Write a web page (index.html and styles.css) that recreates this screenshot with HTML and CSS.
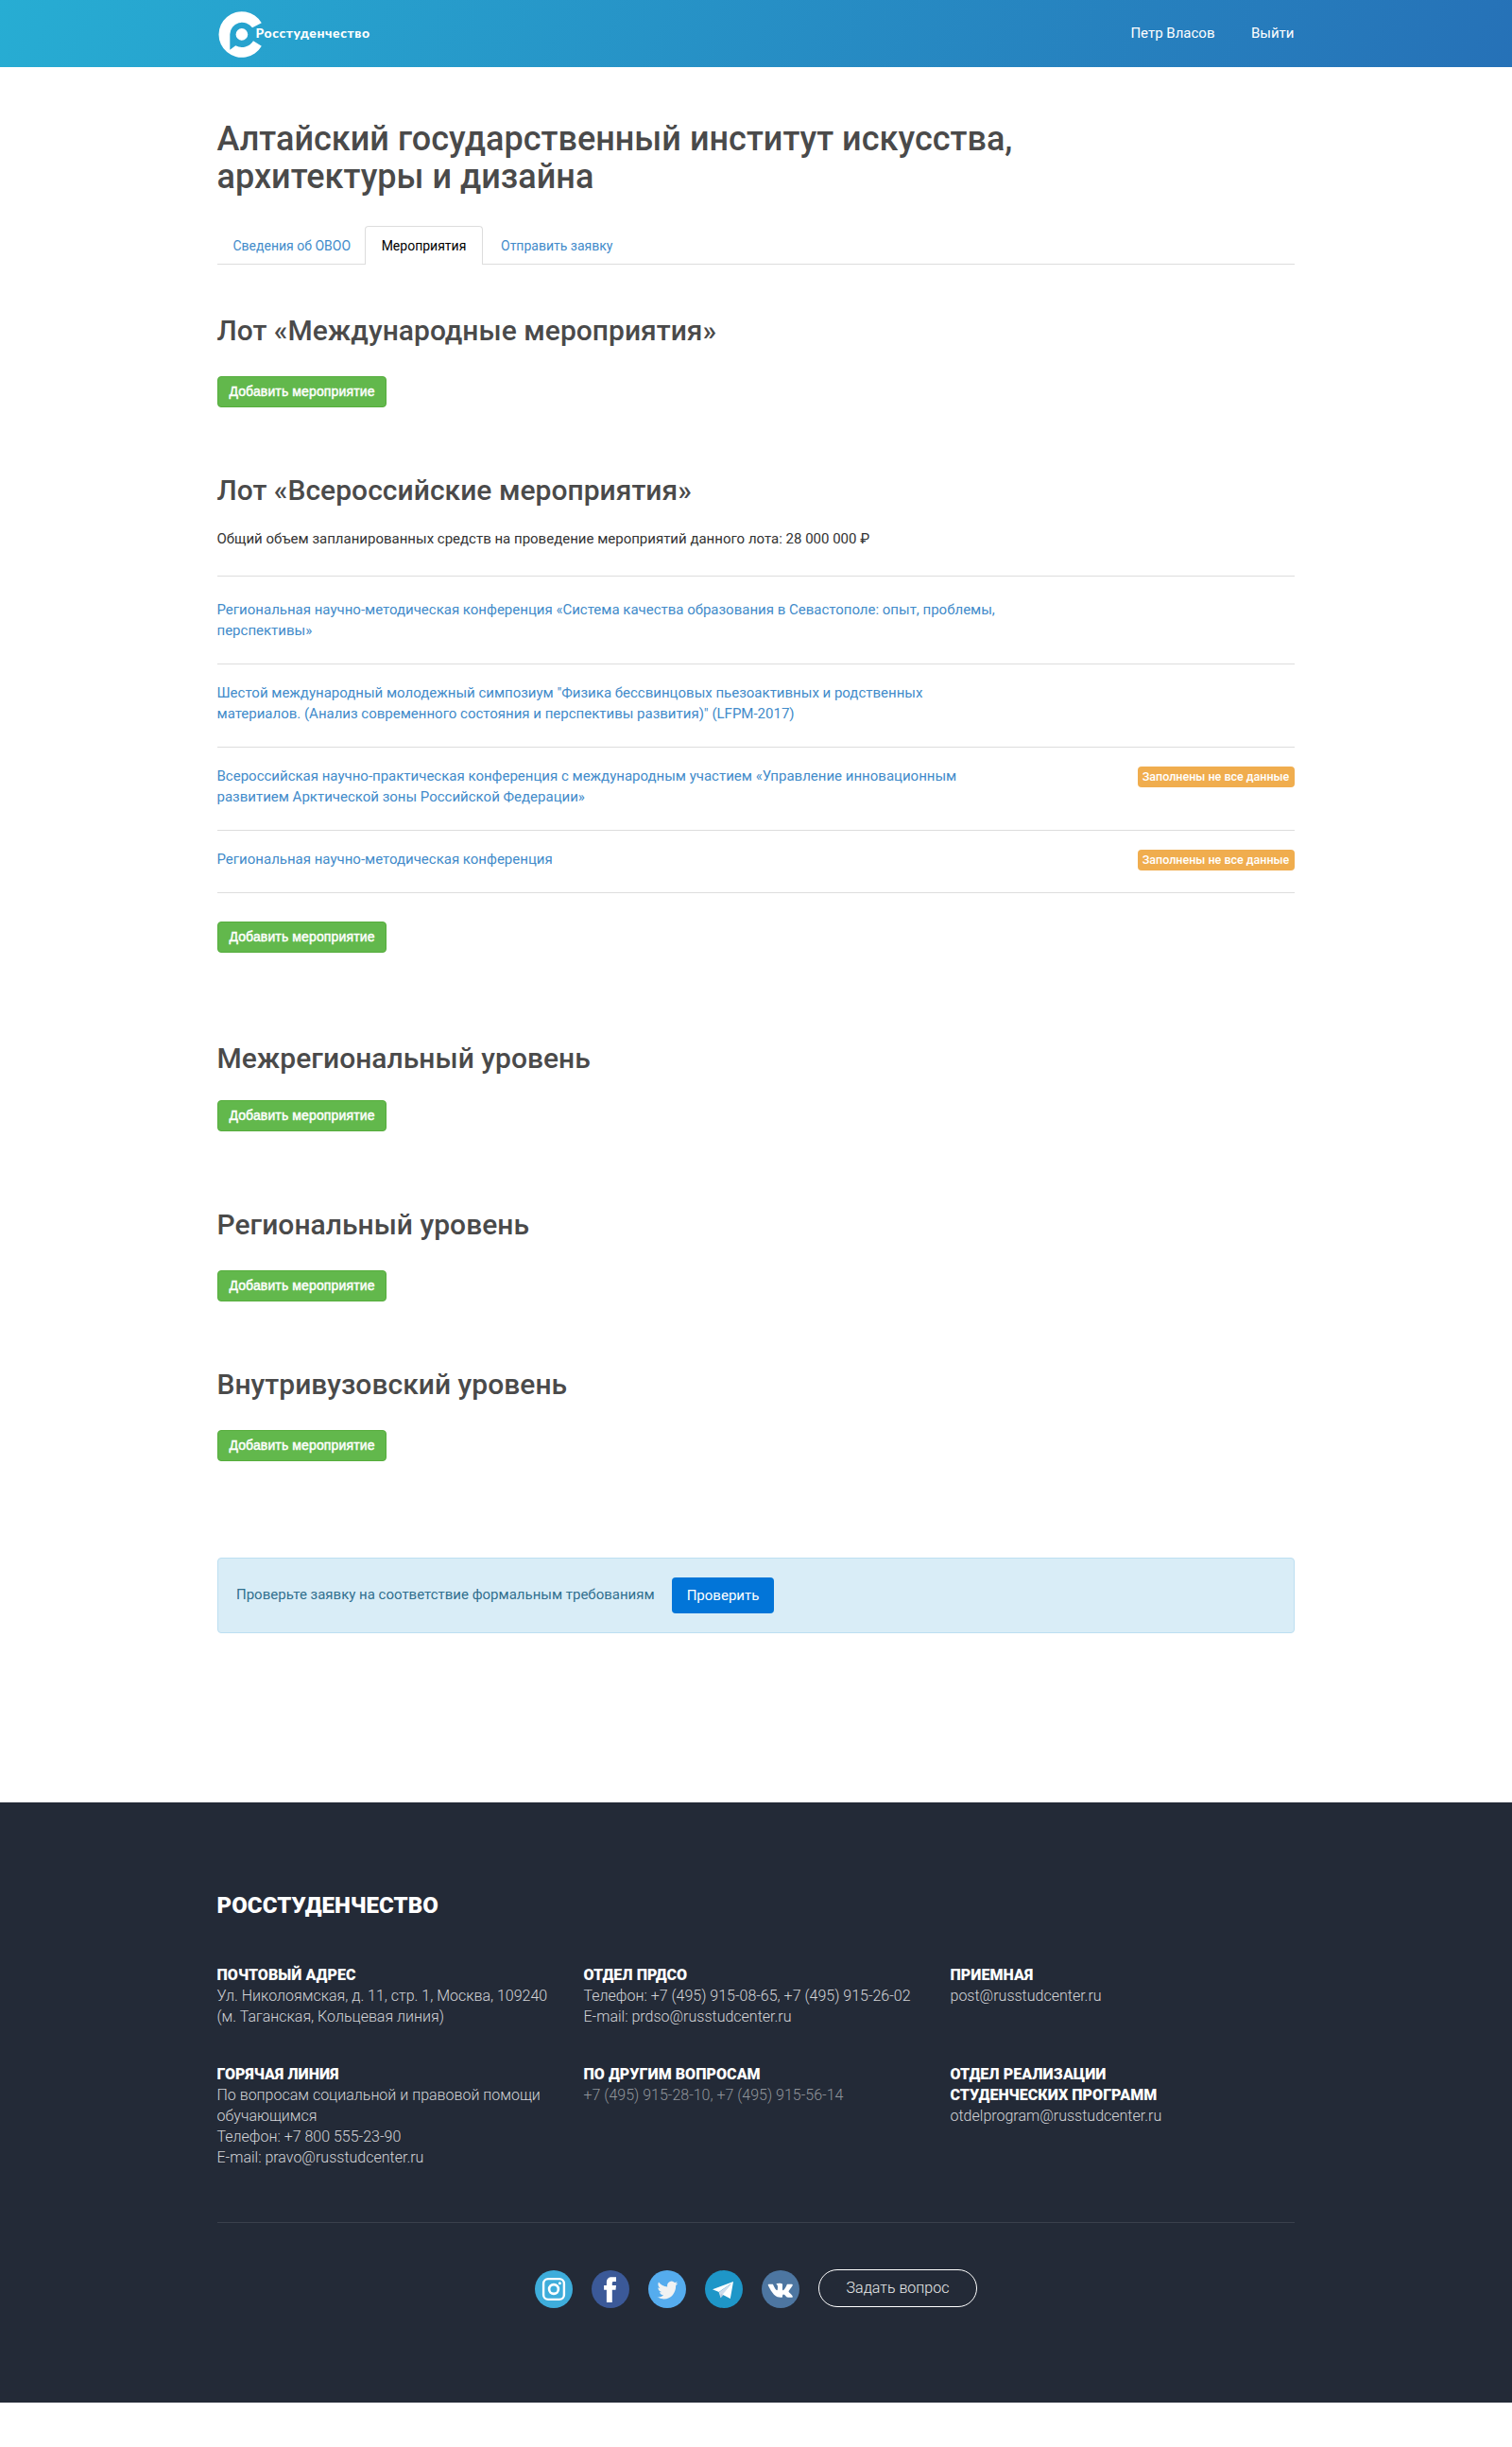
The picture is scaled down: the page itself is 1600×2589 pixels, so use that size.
FILE: index.html
```html
<!DOCTYPE html>
<html lang="ru">
<head>
<meta charset="utf-8">
<title>Росстуденчество</title>
<link rel="stylesheet" href="styles.css">
</head>
<body>
<header class="header">
  <div class="container header-inner">
    <a class="logo">
      <svg class="logo-mark" width="46" height="50" viewBox="0 0 46 50" fill="#fff">
        <path d="M45.8 13.3A24.3 24.3 0 1 0 45.8 37.7L37 32.2A14 14 0 0 1 18.3 37.3L12.3 41.7V25.3A13 13 0 0 1 36 18.3Z"/>
        <circle cx="24.9" cy="25.4" r="6.3"/>
      </svg>
      <span class="logo-text">Росстуденчество</span>
    </a>
    <nav class="user-nav">
      <a>Петр Власов</a>
      <a>Выйти</a>
    </nav>
  </div>
</header>

<main class="container main">
  <h1 class="title">Алтайский государственный институт искусства, архитектуры и дизайна</h1>
  <nav class="tabs">
    <a class="tab">Сведения об ОВОО</a>
    <a class="tab tab-active">Мероприятия</a>
    <a class="tab">Отправить заявку</a>
  </nav>

  <section class="lot lot-international">
    <h2>Лот «Международные мероприятия»</h2>
    <button class="btn-add">Добавить мероприятие</button>
  </section>

  <section class="lot lot-national">
    <h2>Лот «Всероссийские мероприятия»</h2>
    <p class="total">Общий объем запланированных средств на проведение мероприятий данного лота: 28 000 000 ₽</p>
    <ul class="events">
      <li class="event"><a>Региональная научно-методическая конференция «Система качества образования в Севастополе: опыт, проблемы, перспективы»</a></li>
      <li class="event"><a>Шестой международный молодежный симпозиум "Физика бессвинцовых пьезоактивных и родственных материалов. (Анализ современного состояния и перспективы развития)" (LFPM-2017)</a></li>
      <li class="event"><a>Всероссийская научно-практическая конференция с международным участием «Управление инновационным развитием Арктической зоны Российской Федерации»</a><span class="badge">Заполнены не все данные</span></li>
      <li class="event"><a>Региональная научно-методическая конференция</a><span class="badge">Заполнены не все данные</span></li>
    </ul>
    <button class="btn-add">Добавить мероприятие</button>
  </section>

  <section class="lot lot-interregional">
    <h2>Межрегиональный уровень</h2>
    <button class="btn-add">Добавить мероприятие</button>
  </section>

  <section class="lot lot-regional">
    <h2>Региональный уровень</h2>
    <button class="btn-add">Добавить мероприятие</button>
  </section>

  <section class="lot lot-university">
    <h2>Внутривузовский уровень</h2>
    <button class="btn-add">Добавить мероприятие</button>
  </section>

  <div class="alert">
    <span class="alert-text">Проверьте заявку на соответствие формальным требованиям</span>
    <button class="btn-check">Проверить</button>
  </div>
</main>

<footer class="footer">
  <div class="container">
    <h3 class="footer-title">РОССТУДЕНЧЕСТВО</h3>
    <div class="contacts">
      <div class="contact">
        <h4>ПОЧТОВЫЙ АДРЕС</h4>
        <p>Ул. Николоямская, д. 11, стр. 1, Москва, 109240<br>(м. Таганская, Кольцевая линия)</p>
      </div>
      <div class="contact">
        <h4>ОТДЕЛ ПРДСО</h4>
        <p>Телефон: +7 (495) 915-08-65, +7 (495) 915-26-02<br>E-mail: prdso@russtudcenter.ru</p>
      </div>
      <div class="contact">
        <h4>ПРИЕМНАЯ</h4>
        <p>post@russtudcenter.ru</p>
      </div>
      <div class="contact">
        <h4>ГОРЯЧАЯ ЛИНИЯ</h4>
        <p>По вопросам социальной и правовой помощи обучающимся<br>Телефон: +7 800 555-23-90<br>E-mail: pravo@russtudcenter.ru</p>
      </div>
      <div class="contact">
        <h4>ПО ДРУГИМ ВОПРОСАМ</h4>
        <p class="muted">+7 (495) 915-28-10, +7 (495) 915-56-14</p>
      </div>
      <div class="contact">
        <h4>ОТДЕЛ РЕАЛИЗАЦИИ<br>СТУДЕНЧЕСКИХ ПРОГРАММ</h4>
        <p>otdelprogram@russtudcenter.ru</p>
      </div>
    </div>
    <div class="social">
      <svg class="social-icon" viewBox="0 0 40 40">
        <circle cx="20" cy="20" r="20" fill="#3eaddb"/>
        <g fill="none" stroke="#fff">
          <rect x="9.1" y="9.1" width="21.8" height="21.8" rx="5" stroke-width="2.4"/>
          <circle cx="20" cy="20" r="4.9" stroke-width="2.6"/>
        </g>
        <circle cx="26.4" cy="13.7" r="1.5" fill="#fff"/>
      </svg>
      <svg class="social-icon" viewBox="0 0 40 40">
        <circle cx="20" cy="20" r="20" fill="#3b5998"/>
        <path fill="#fff" d="M15.9 34V20.7H13.1V15.9H15.9V13C15.9 9.2 17.8 7.2 21.5 7.2H26V12.1H23.2C22 12.1 21.8 12.8 21.8 14V15.9H26L25.5 20.7H21.8V34Z"/>
      </svg>
      <svg class="social-icon" viewBox="0 0 40 40">
        <circle cx="20" cy="20" r="20" fill="#55acee"/>
        <path fill="#f1f2f2" transform="translate(9.5 9.4) scale(.91 .97)" d="M23.953 4.57a10 10 0 01-2.825.775 4.958 4.958 0 002.163-2.723c-.951.555-2.005.959-3.127 1.184a4.92 4.92 0 00-8.384 4.482C7.69 8.095 4.067 6.13 1.64 3.162a4.822 4.822 0 00-.666 2.475c0 1.71.87 3.213 2.188 4.096a4.904 4.904 0 01-2.228-.616v.06a4.923 4.923 0 003.946 4.827 4.996 4.996 0 01-2.212.085 4.936 4.936 0 004.604 3.417 9.867 9.867 0 01-6.102 2.105c-.39 0-.779-.023-1.17-.067a13.995 13.995 0 007.557 2.209c9.053 0 13.998-7.496 13.998-13.985 0-.21 0-.42-.015-.63A9.935 9.935 0 0024 4.59z"/>
      </svg>
      <svg class="social-icon" viewBox="0 0 40 40">
        <circle cx="20" cy="20" r="20" fill="#1e96c8"/>
        <path fill="#cfdcec" d="M14.6 23.3L27.5 14.2L16.6 29.2Z"/>
        <path fill="#fff" d="M8 20.3L30 12L26.8 30L18.6 25.8L27.8 14.1L14.7 22.9Z"/>
        <path fill="#b5c7dc" d="M16.4 29.3L16.9 25L19.6 26.2Z"/>
      </svg>
      <svg class="social-icon" viewBox="0 0 40 40">
        <circle cx="20" cy="20" r="20" fill="#4d76a1"/>
        <path fill="#fff" transform="translate(6.7 8.4) scale(1.09 1.07)" d="M13.162 18.994c.609 0 .858-.406.851-.915-.031-1.917.714-2.949 2.059-1.604 1.488 1.488 1.796 2.519 3.603 2.519h3.2c.808 0 1.126-.26 1.126-.668 0-.863-1.421-2.386-2.625-3.504-1.686-1.565-1.765-1.602-.313-3.486 1.801-2.339 4.157-5.336 2.073-5.336h-3.981c-.772 0-.828.435-1.103 1.083-.995 2.347-2.886 5.387-3.604 4.922-.751-.485-.407-2.406-.35-5.261.015-.754.011-1.271-1.141-1.539-.629-.145-1.241-.205-1.809-.205-2.273 0-3.841.953-2.95 1.119 1.571.293 1.42 3.692 1.054 5.16-.638 2.556-3.036-2.024-4.035-4.305-.241-.548-.315-.974-1.175-.974h-3.255c-.492 0-.787.16-.787.516 0 .602 2.96 6.72 5.786 9.77 2.756 2.975 5.48 2.708 7.376 2.708z"/>
      </svg>
      <a class="ask">Задать вопрос</a>
    </div>
  </div>
</footer>
</body>
</html>
```
FILE: styles.css
```css
* { box-sizing: border-box; }

body {
  margin: 0;
  background: #fff;
  color: #333;
  font: 400 15px/22px Roboto, sans-serif;
}

h1, h2, h3, h4, p, ul { margin: 0; padding: 0; }
ul { list-style: none; }
button { border: 0; margin: 0; }

.container { width: 1140px; margin: 0 0 0 calc(50% - 570.5px); }

/* Header */
.header {
  height: 71px;
  background: linear-gradient(115deg, #27add3, #2671b7);
}
.header-inner {
  display: flex;
  justify-content: space-between;
  height: 71px;
}
.logo { display: flex; align-items: flex-start; padding: 11px 0 0 1px; }
.logo-mark { display: block; }
.logo-text {
  margin: 14px 0 0 -6px;
  color: #fff;
  font: 900 14px/20px Lato, sans-serif;
  letter-spacing: .58px;
}
.user-nav {
  display: flex;
  gap: 38.5px;
  padding-top: 24px;
  color: #fff;
}

/* Page body */
.main { height: 1836px; padding-top: 56px; }
.title {
  width: 870px;
  color: #4a4a4a;
  font-size: 36px;
  font-weight: 500;
  line-height: 40px;
  letter-spacing: .03px;
}
.tabs {
  display: flex;
  height: 41px;
  margin-top: 32px;
  border-bottom: 1px solid #ddd;
  font-size: 14px;
}
.tab {
  height: 41px;
  padding: 9px 15px 0 16px;
  border: 1px solid transparent;
  border-bottom: 0;
  color: #428bca;
}
.tab:first-child { width: 156.5px; padding-right: 0; white-space: nowrap; }
.tab-active {
  width: 125px;
  padding: 9px 0 0;
  border-color: #ddd;
  border-radius: 4px 4px 0 0;
  background: #fff;
  color: #000;
  text-align: center;
}
.tab-active + .tab { padding-left: 18px; }

.lot h2 {
  color: #4a4a4a;
  font-size: 30px;
  font-weight: 500;
  line-height: 33px;
  letter-spacing: .03px;
}
.btn-add {
  display: block;
  width: 179px;
  height: 33px;
  margin-top: 32px;
  margin-left: .5px;
  padding: 0;
  border: 1px solid #56ad3d;
  border-radius: 4px;
  background: #62b84c;
  color: #fff;
  font: 400 14px/29px "Liberation Sans", Arial, sans-serif;
  letter-spacing: .13px;
  -webkit-text-stroke: .45px #fff;
}
.lot-international { margin-top: 53px; }
.lot-national { margin-top: 71px; }
.lot-national .btn-add { margin-top: 30px; }
.lot-interregional { margin-top: 95px; }
.lot-interregional .btn-add { margin-top: 28px; }
.lot-regional { margin-top: 82px; }
.lot-university { margin-top: 71px; }

.total { margin-top: 24px; }
.events { margin-top: 28px; border-top: 1px solid #ddd; }
.event {
  display: flex;
  justify-content: space-between;
  align-items: flex-start;
  padding: 19px 0 24px;
  border-bottom: 1px solid #ddd;
  color: #428bca;
}
.event:first-child { padding-top: 24px; }
.event a { width: 830px; }
.event:nth-child(2) a, .event:nth-child(3) a { width: 800px; }
.badge {
  width: 166px;
  height: 22px;
  margin: 1px 0 -1px;
  border-radius: 4px;
  background: #f0ad4e;
  color: #fff;
  font-size: 12.5px;
  font-weight: 500;
  line-height: 21px;
  text-align: center;
}

.alert {
  display: flex;
  align-items: flex-start;
  gap: 19px;
  height: 80px;
  margin-top: 102px;
  padding: 20px 19.5px;
  border: 1px solid #bcdff1;
  border-radius: 4px;
  background: #d9edf7;
  color: #31708f;
}
.alert-text { width: 442px; padding-top: 7px; white-space: nowrap; }
.btn-check {
  width: 108px;
  height: 38px;
  padding: 0;
  border-radius: 4px;
  background: #0275d8;
  color: #fff;
  font: 400 15px/38px Roboto, sans-serif;
}

/* Footer */
.footer {
  height: 635px;
  padding-top: 96px;
  background: #232a37;
  font-size: 16px;
}
.footer-title {
  color: #fff;
  font-size: 24px;
  font-weight: 900;
  line-height: 26px;
  letter-spacing: .08px;
}
.contacts {
  display: grid;
  grid-template-columns: 388px 388px 364px;
  gap: 39px 0;
  padding: 50px 0 57px;
  border-bottom: 1px solid #3a404c;
}
.contact { padding-right: 30px; }
.contact h4 {
  color: #fff;
  font-size: 16px;
  font-weight: 900;
  letter-spacing: .05px;
}
.contact p { color: #d3d4d7; font-weight: 300; }
.contact .muted { color: #91959b; }

.social {
  display: flex;
  justify-content: center;
  gap: 20px;
  padding: 49px 0 0 1px;
}
.social-icon { width: 40px; height: 40px; margin-top: 1px; }
.ask {
  width: 168px;
  height: 40px;
  border: 1px solid #fff;
  border-radius: 20px;
  color: #e9eaeb;
  font-weight: 300;
  line-height: 38px;
  text-align: center;
}
```
